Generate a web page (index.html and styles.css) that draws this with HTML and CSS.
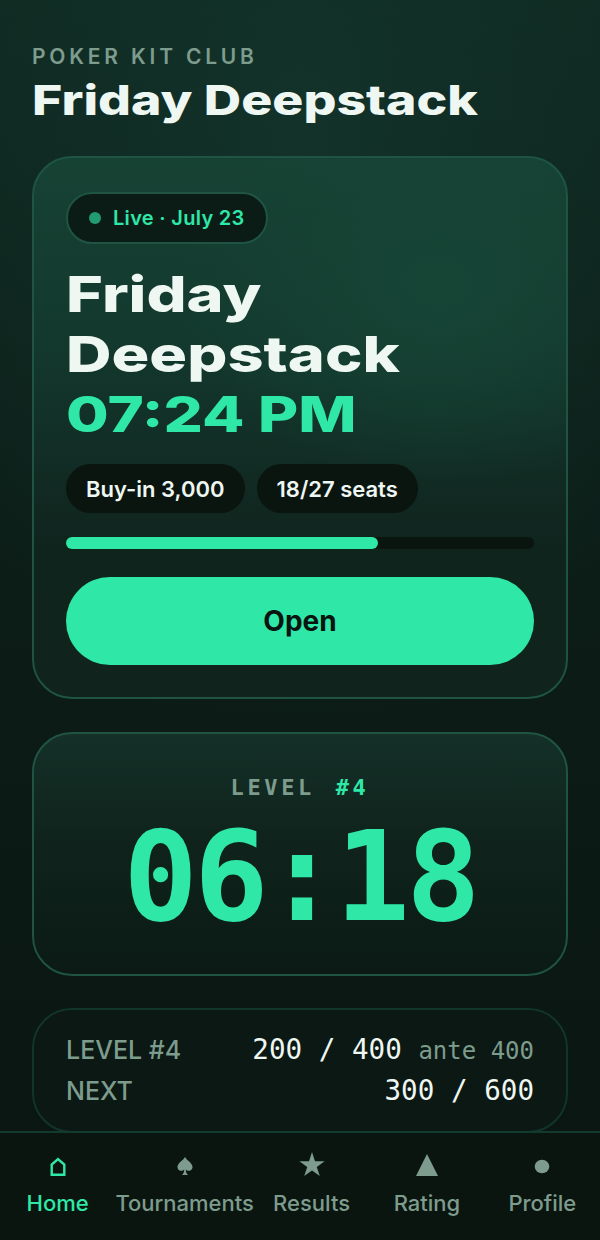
FILE: index.html
```html
<!DOCTYPE html>
<html lang="en">
<head>
    <meta charset="UTF-8">
    <meta name="viewport" content="width=device-width, initial-scale=1.0">
    <title>Friday Deepstack</title>
    <link rel="stylesheet" href="styles.css">
</head>
<body>
    <main class="page">
        <header class="head">
            <div class="eyebrow">POKER KIT CLUB</div>
            <h1 class="page-title">Friday Deepstack</h1>
        </header>

        <section class="card event">
            <div class="live"><span class="live-dot"></span>Live · July 23</div>
            <h2 class="event-title">Friday<br>Deepstack</h2>
            <div class="event-time">07:24 PM</div>
            <div class="chips">
                <span class="chip">Buy-in 3,000</span>
                <span class="chip">18/27 seats</span>
            </div>
            <div class="progress"><div class="progress-fill" style="width: 66.7%"></div></div>
            <button class="open-btn">Open</button>
        </section>

        <section class="card timer">
            <div class="timer-label">LEVEL <b>#4</b></div>
            <div class="timer-value">06:18</div>
        </section>

        <section class="card blinds">
            <div class="blind-row">
                <span class="blind-name">LEVEL #4</span>
                <span class="blind-value">200 / 400 <small>ante 400</small></span>
            </div>
            <div class="blind-row">
                <span class="blind-name">NEXT</span>
                <span class="blind-value">300 / 600</span>
            </div>
        </section>
    </main>

    <nav class="tabs">
        <a class="tab active">
            <svg class="tab-icon" viewBox="0 0 28 28"><path d="M7.7 24.8V14.6L14 9l6.3 5.6v10.2z" fill="none" stroke="currentColor" stroke-width="2.4"/></svg>
            Home
        </a>
        <a class="tab">
            <svg class="tab-icon" viewBox="0 0 28 28"><path d="M14 7c1.500 3 6.400 5.400 7.400 9 .6 2.700-1.400 4.800-3.600 4.800-1.300 0-2.400-.5-3-1.400.1 2.700.8 4.600 2.500 5.600H10.700c1.700-1 2.400-2.900 2.500-5.600-.6.900-1.700 1.400-3 1.400-2.200 0-4.200-2.100-3.600-4.800C7.600 12.400 12.500 10 14 7z" fill="currentColor"/></svg>
            Tournaments
        </a>
        <a class="tab">
            <svg class="tab-icon" viewBox="0 0 28 28"><path d="M14 2l3 9.300h9.600l-7.800 5.700 3 9-7.800-5.600L6.200 26l3-9-7.800-5.700H11z" fill="currentColor"/></svg>
            Results
        </a>
        <a class="tab">
            <svg class="tab-icon" viewBox="0 0 28 28"><path d="M14 4l11 22H3z" fill="currentColor"/></svg>
            Rating
        </a>
        <a class="tab">
            <svg class="tab-icon" viewBox="0 0 28 28"><ellipse cx="14" cy="16.500" rx="7.300" ry="6.800" fill="currentColor"/></svg>
            Profile
        </a>
    </nav>
</body>
</html>
```

FILE: styles.css
```css
* {
    box-sizing: border-box;
}
html, body {
    margin: 0;
    padding: 0;
}
body {
    width: 600px;
    height: 1240px;
    overflow: hidden;
    display: flex;
    flex-direction: column;
    font-family: Inter, "Noto Sans", sans-serif;
    color: #eef7f1;
    background:
        radial-gradient(ellipse 420px 620px at 50% 120px, #12322a 0%, rgba(18, 50, 42, 0) 100%),
        linear-gradient(180deg, #0f2a21 0%, #0c1c17 50%, #0a1510 100%);
}

.page {
    flex: 1;
    min-height: 0;
    overflow: hidden;
    padding: 44px 32px 0;
}
.eyebrow {
    font-size: 21px;
    line-height: 26px;
    font-weight: 600;
    letter-spacing: 3.8px;
    color: #7d9c8d;
}
.page-title {
    margin: 4px 0 0;
    font-size: 41px;
    line-height: 52px;
    font-weight: 800;
    white-space: nowrap;
    color: #eef7f1;
    transform: scaleX(1.262);
    transform-origin: left center;
}

.card {
    border: 2px solid #1f5443;
    border-radius: 40px;
}
.event {
    margin-top: 30px;
    height: 543px;
    padding: 34px 32px;
    background:
        radial-gradient(ellipse 260px 200px at 76% 24%, #164536 0%, rgba(22, 69, 54, 0) 100%),
        linear-gradient(180deg, #164234 0%, #13382d 35%, #10241e 72%, #10231d 100%);
}
.live {
    display: inline-flex;
    align-items: center;
    height: 52px;
    padding: 0 21px;
    border: 2px solid #1f5443;
    border-radius: 26px;
    background: #0b1c17;
    color: #2fe8a8;
    font-size: 20px;
    font-weight: 600;
    letter-spacing: 0.3px;
}
.live-dot {
    width: 12px;
    height: 12px;
    margin-right: 12px;
    border-radius: 50%;
    background: #229a72;
}
.event-title {
    margin: 20px 0 0;
    font-size: 50px;
    line-height: 60px;
    font-weight: 800;
    white-space: nowrap;
    color: #eef7f1;
    transform: scaleX(1.26);
    transform-origin: left center;
}
.event-time {
    font-size: 50px;
    line-height: 60px;
    font-weight: 800;
    white-space: nowrap;
    color: #2fe8a8;
    transform: scaleX(1.235);
    transform-origin: left center;
}
.chips {
    display: flex;
    gap: 12px;
    margin-top: 20px;
}
.chip {
    display: flex;
    align-items: center;
    height: 49px;
    padding: 0 20px;
    border-radius: 25px;
    background: #0a1510;
    font-size: 22px;
    font-weight: 600;
}
.progress {
    height: 12px;
    margin-top: 24px;
    border-radius: 6px;
    background: #0a1510;
}
.progress-fill {
    height: 100%;
    border-radius: 6px;
    background: #2fe8a8;
}
.open-btn {
    display: block;
    width: 100%;
    height: 88px;
    margin-top: 28px;
    border: none;
    border-radius: 44px;
    background: #2fe8a8;
    color: #0a1510;
    font-family: inherit;
    font-size: 28px;
    font-weight: 700;
}

.timer {
    margin-top: 33px;
    height: 244px;
    padding-top: 40px;
    text-align: center;
    background: linear-gradient(180deg, #143028 0%, #0f231c 45%, #0b1a15 100%);
}
.timer-label {
    font-family: "DejaVu Sans Mono", monospace;
    font-size: 22px;
    line-height: 28px;
    font-weight: 700;
    letter-spacing: 3.6px;
    color: #7d9c8d;
}
.timer-label b {
    margin-left: 4px;
    color: #2fe8a8;
}
.timer-value {
    margin-top: 13px;
    font-family: "DejaVu Sans Mono", monospace;
    font-size: 124px;
    line-height: 124px;
    font-weight: 700;
    letter-spacing: -4px;
    color: #2fe8a8;
}

.blinds {
    margin-top: 32px;
    height: 125px;
    padding: 23px 32px 0;
    border-color: #12352b;
    background: #0b1813;
}
.blind-row {
    display: flex;
    justify-content: space-between;
    align-items: baseline;
    height: 41px;
}
.blind-name {
    font-size: 25px;
    font-weight: 500;
    color: #7d9c8d;
}
.blind-value {
    font-family: "DejaVu Sans Mono", monospace;
    font-size: 27.6px;
    color: #eef7f1;
}
.blind-value small {
    font-size: 24px;
    color: #7d9c8d;
}

.tabs {
    display: flex;
    height: 109px;
    flex-shrink: 0;
    border-top: 2px solid #143a2f;
    background: #0a1510;
}
.tab {
    flex: 1;
    display: flex;
    flex-direction: column;
    align-items: center;
    padding-top: 17px;
    font-size: 22px;
    font-weight: 500;
    color: #7d9c8d;
}
.tab.active {
    color: #2fe8a8;
}
.tab-icon {
    display: block;
    width: 28px;
    height: 28px;
    margin-bottom: 12px;
}
```
